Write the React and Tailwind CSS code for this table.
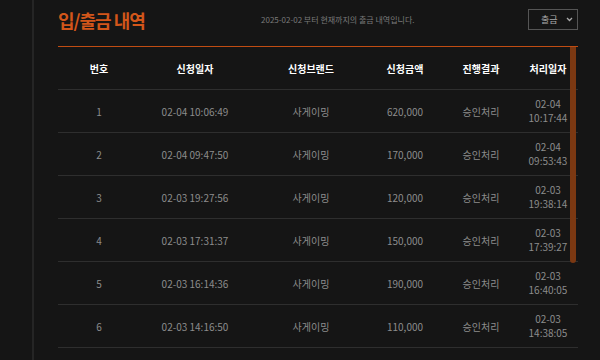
import React from "react";

const rows = [
  ["1", "02-04 10:06:49", "사게이밍", "620,000", "승인처리", "02-04", "10:17:44"],
  ["2", "02-04 09:47:50", "사게이밍", "170,000", "승인처리", "02-04", "09:53:43"],
  ["3", "02-03 19:27:56", "사게이밍", "120,000", "승인처리", "02-03", "19:38:14"],
  ["4", "02-03 17:31:37", "사게이밍", "150,000", "승인처리", "02-03", "17:39:27"],
  ["5", "02-03 16:14:36", "사게이밍", "190,000", "승인처리", "02-03", "16:40:05"],
  ["6", "02-03 14:16:50", "사게이밍", "110,000", "승인처리", "02-03", "14:38:05"],
];

const cols = "grid grid-cols-[82px_110px_122px_66px_86px_48px]";

export default function App() {
  return (
    <div
      className="w-[600px] h-[360px] bg-[#151515] overflow-hidden flex"
      style={{ fontFamily: '"Noto Sans CJK KR", "Noto Sans", sans-serif' }}
    >
      <div className="w-[32px] shrink-0" />
      <div className="w-[2px] shrink-0 bg-[#252525]" />
      <div className="w-[24px] shrink-0" />
      <div className="w-[520px] shrink-0 flex flex-col">
        <div className="h-[46px] flex items-start pt-[8px]">
          <h1 className="text-[18px] leading-[24px] font-bold tracking-[-1px] text-[#d2561a] w-[203px]">입/출금 내역</h1>
          <p className="mt-[6px] text-[8px] leading-[12px] text-[#7a7a7a] flex-1">2025-02-02 부터 현재까지의 출금 내역입니다.</p>
          <div className="mt-[1px] w-[50px] h-[21px] border border-[#555] flex items-center justify-between pl-[12px] pr-[4px]">
            <span className="text-[9px] text-[#aaa]">출금</span>
            <svg width="7" height="5" viewBox="0 0 7 5" fill="none">
              <path d="M1 1 L3.5 3.5 L6 1" stroke="#aaa" strokeWidth="1.3" />
            </svg>
          </div>
        </div>
        <div className="h-px bg-[#c04c12]" />
        <div className="relative">
          <div className={`${cols} h-[43px] items-center border-b border-[#2e2e2e] text-[10px] font-bold text-white text-center`}>
            <div>번호</div>
            <div>신청일자</div>
            <div>신청브랜드</div>
            <div>신청금액</div>
            <div>진행결과</div>
            <div>처리일자</div>
          </div>
          {rows.map((r) => (
            <div
              key={r[0]}
              className={`${cols} h-[43px] items-center border-b border-[#2e2e2e] text-[10px] text-[#8c8c8c] text-center`}
            >
              <div>{r[0]}</div>
              <div>{r[1]}</div>
              <div>{r[2]}</div>
              <div>{r[3]}</div>
              <div>{r[4]}</div>
              <div className="leading-[14px]">
                <div>{r[5]}</div>
                <div>{r[6]}</div>
              </div>
            </div>
          ))}
          <div className="absolute right-[2px] top-0 w-[6px] h-[216px] bg-[#7b3812] rounded-b-[3px]" />
        </div>
      </div>
    </div>
  );
}
